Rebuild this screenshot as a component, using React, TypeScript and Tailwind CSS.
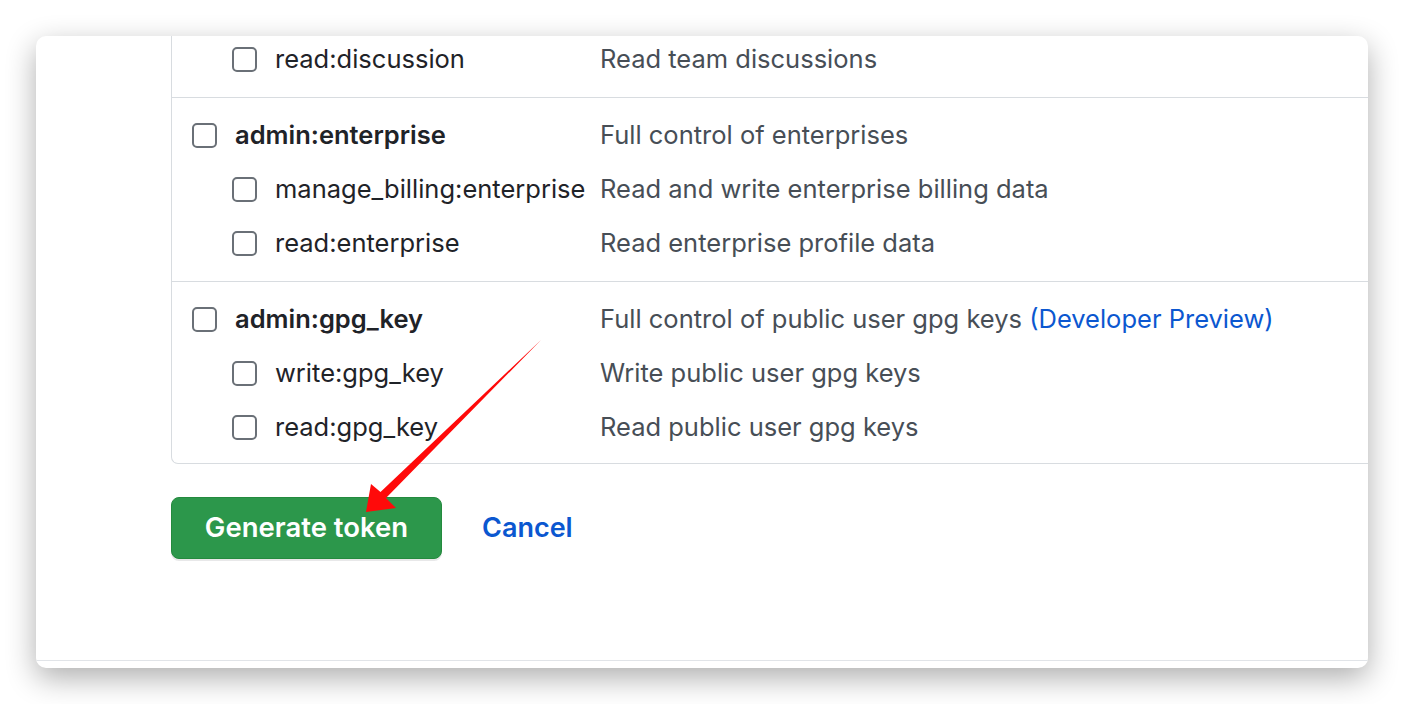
import React from "react";

type Scope = { name: string; desc: string; preview?: boolean };
type Group = { parent?: Scope; children: Scope[] };

const groups: Group[] = [
  {
    parent: { name: "admin:enterprise", desc: "Full control of enterprises" },
    children: [
      { name: "manage_billing:enterprise", desc: "Read and write enterprise billing data" },
      { name: "read:enterprise", desc: "Read enterprise profile data" },
    ],
  },
  {
    parent: { name: "admin:gpg_key", desc: "Full control of public user gpg keys", preview: true },
    children: [
      { name: "write:gpg_key", desc: "Write public user gpg keys" },
      { name: "read:gpg_key", desc: "Read public user gpg keys" },
    ],
  },
];

function Box() {
  return (
    <span className="block size-[25px] shrink-0 rounded-[5px] border-2 border-[#6a7077] bg-white" />
  );
}

function ScopeRow({ scope, child }: { scope: Scope; child?: boolean }) {
  return (
    <div className={`flex h-[54px] items-center ${child ? "pl-[60px]" : "pl-[20px]"}`}>
      <label className={`flex items-center gap-[18px] ${child ? "w-[368px]" : "w-[408px]"}`}>
        <Box />
        <span className={child ? "whitespace-nowrap text-[#1f2328]" : "whitespace-nowrap font-semibold text-[#1f2328]"}>
          {scope.name}
        </span>
      </label>
      <span className="whitespace-nowrap text-[#474e56]">
        {scope.desc}
        {scope.preview && <span className="text-[#0b57d0]"> (Developer Preview)</span>}
      </span>
    </div>
  );
}

function Arrow() {
  return (
    <svg className="pointer-events-none absolute left-0 top-0" width="1404" height="704">
      <polygon
        points="366,512 371,484 380.5,492 541,340 386,498 396,508"
        fill="#ff0a0a"
      />
    </svg>
  );
}

export default function App() {
  return (
    <div
      className="relative h-[704px] w-[1404px] bg-white p-[36px]"
      style={{ fontFamily: "Inter, 'Liberation Sans', sans-serif" }}
    >
      <div className="flex h-[632px] flex-col overflow-hidden rounded-[10px] bg-white shadow-[0_10px_30px_rgba(0,0,0,0.32)]">
        <div className="flex-1 pl-[135px] text-[25.5px]">
          <div className="w-[1400px] rounded-bl-[7px] border-b border-l border-[#d8dce0]">
            <div className="border-b border-[#d8dce0] pb-[11px]">
              <div className="-mt-[4px]">
                <ScopeRow scope={{ name: "read:discussion", desc: "Read team discussions" }} child />
              </div>
            </div>
            <div className="border-b border-[#d8dce0] pb-[11px] pt-[10px]">
              <ScopeRow scope={groups[0].parent!} />
              {groups[0].children.map((c) => (
                <ScopeRow key={c.name} scope={c} child />
              ))}
            </div>
            <div className="pb-[9px] pt-[10px]">
              <ScopeRow scope={groups[1].parent!} />
              {groups[1].children.map((c) => (
                <ScopeRow key={c.name} scope={c} child />
              ))}
            </div>
          </div>
          <div className="mt-[33px] flex items-center gap-[40px]">
            <button className="h-[62px] w-[271px] rounded-[8px] border border-[#248a3e] bg-[#2c974b] text-[27.5px] font-semibold text-white shadow-[0_2px_0_rgba(27,31,36,0.1)]">
              Generate token
            </button>
            <a className="text-[27px] font-semibold text-[#0b57d0]">Cancel</a>
          </div>
        </div>
        <div className="h-[8px] border-t border-[#e1e4e8]" />
      </div>
      <Arrow />
    </div>
  );
}
